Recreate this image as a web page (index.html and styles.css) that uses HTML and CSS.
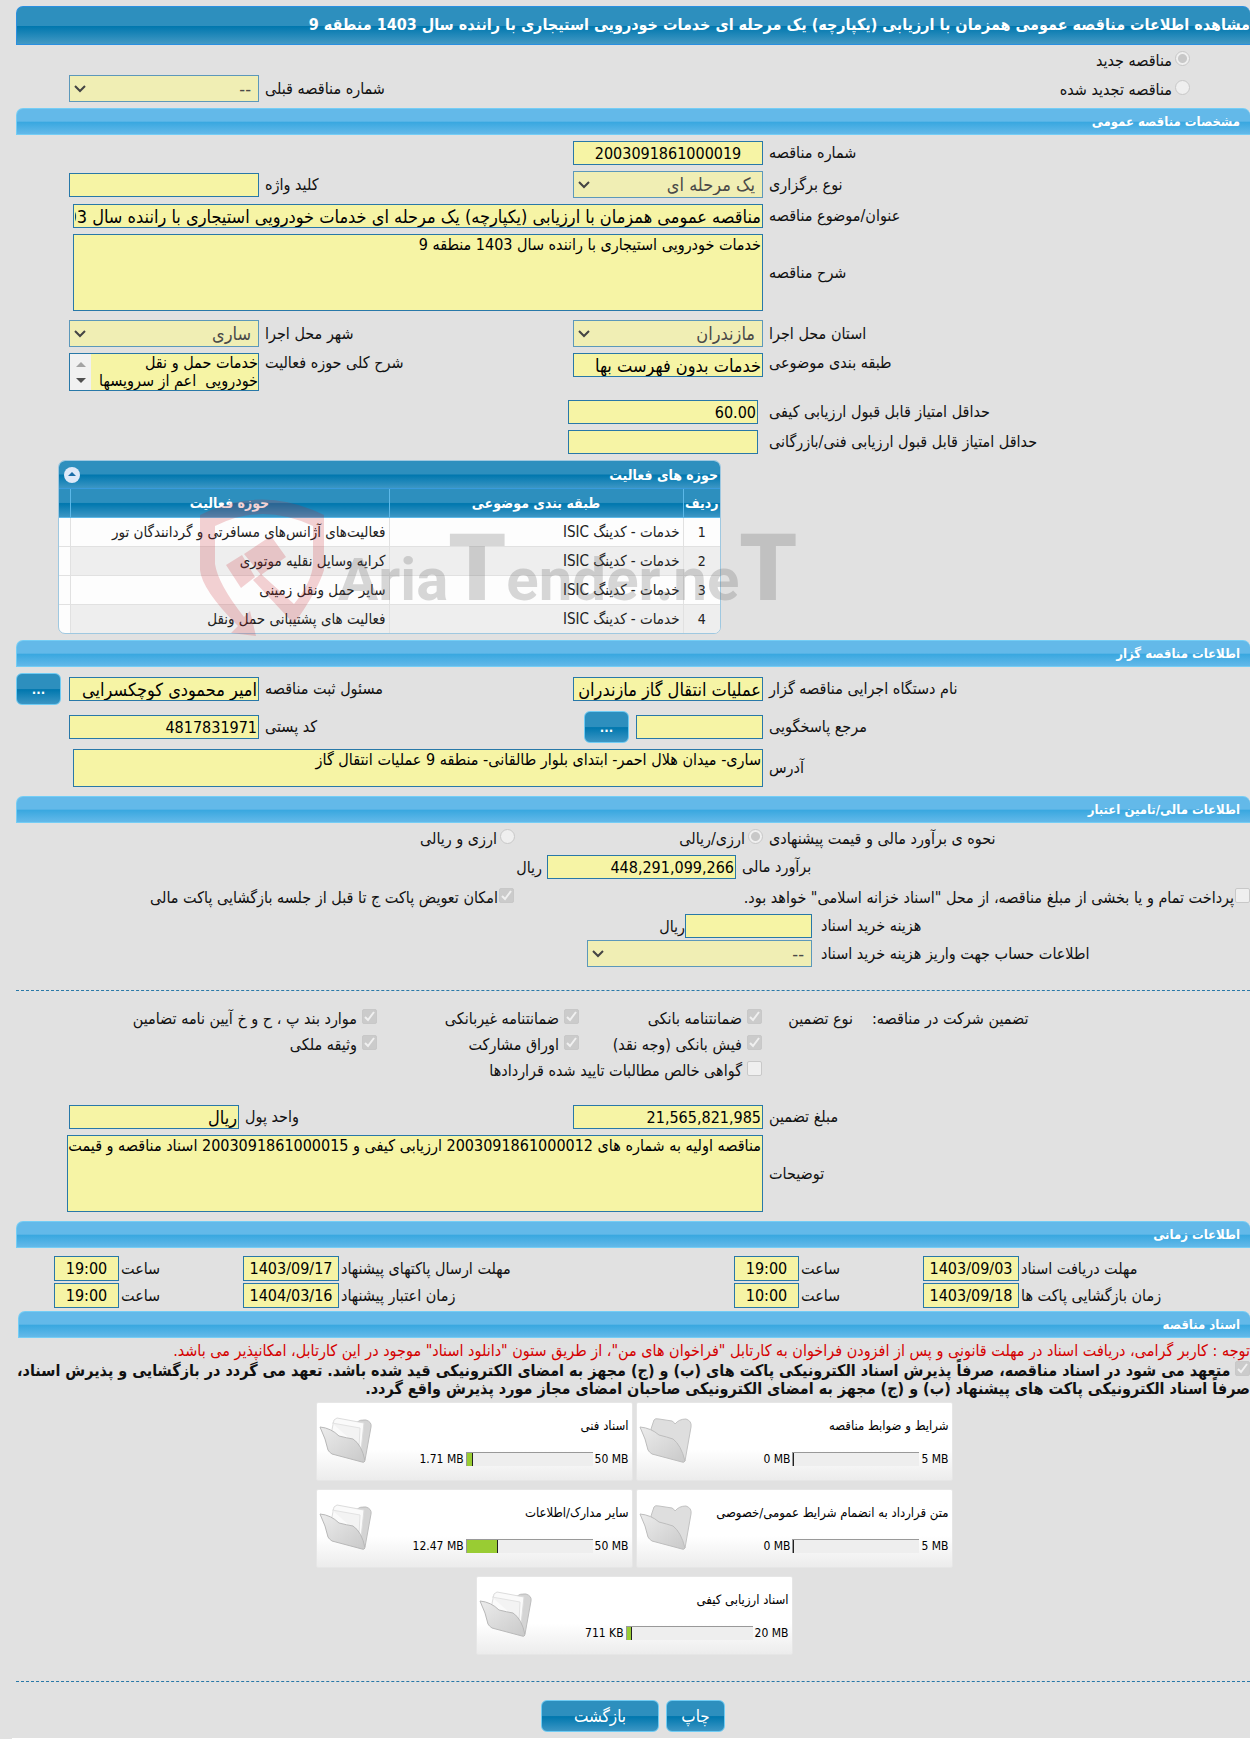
FILE: index.html
```html
<!DOCTYPE html>
<html lang="fa" dir="rtl">
<head>
  <meta charset="UTF-8">
  <meta name="viewport" content="width=device-width, initial-scale=1.0">
  <title>مشاهده اطلاعات مناقصه</title>
  <link rel="stylesheet" href="styles.css">
</head>
<body>
  <!-- folder shapes used by the document cards -->
  <svg class="defs" width="0" height="0" aria-hidden="true">
    <defs>
      <linearGradient id="folderFill" x1="0" y1="0" x2="1" y2="1">
        <stop offset="0" stop-color="#ececec"/>
        <stop offset="1" stop-color="#c9c9c9"/>
      </linearGradient>
      <symbol id="folderEmpty" viewBox="0 0 54 46">
        <path d="M12 12 L15 3 Q16 1 20 2 L33 4 Q35 5 36 7 Q40 2 47 2 Q53 4 52 10 L46 44 L24 36Z" fill="#dedede" stroke="#c2c2c2"/>
        <path d="M1 10 Q12 11 20 18 Q28 20 34 22 Q42 28 46 44 Q45 46 43 45 L13 37 Q10 35 9 33 L6 22Z" fill="url(#folderFill)" stroke="#bdbdbd"/>
      </symbol>
      <symbol id="folderFull" viewBox="0 0 54 46">
        <path d="M36 6 Q42 2 47 3 Q53 5 52 10 L46 43 L30 30Z" fill="#d4d4d4" stroke="#bdbdbd"/>
        <path d="M15 3 L18 1 L45 6 L42 34 L11 22Z" fill="#fafafa" stroke="#dcdcdc"/>
        <path d="M13 6 L41 11 L40 30" fill="#f3f3f3" stroke="#e2e2e2"/>
        <path d="M1 10 Q12 11 20 19 Q28 21 34 22 Q43 28 46 44 Q45 46 43 45 L13 37 Q10 35 9 33 L6 22Z" fill="url(#folderFill)" stroke="#b8b8b8"/>
      </symbol>
    </defs>
  </svg>

  <main class="page">
    <h1 class="page-title">مشاهده اطلاعات مناقصه عمومی همزمان با ارزیابی (یکپارچه) یک مرحله ای خدمات خودرویی استیجاری با راننده سال 1403 منطقه 9</h1>

    <div class="choice-row first">
      <input type="radio" id="newTender" name="tenderKind" checked disabled>
      <label for="newTender">مناقصه جدید</label>
    </div>
    <div class="row flush">
      <div class="choice-row renewed">
        <input type="radio" id="renewedTender" name="tenderKind" disabled>
        <label for="renewedTender">مناقصه تجدید شده</label>
      </div>
      <label class="col-b" for="prevNumber">شماره مناقصه قبلی</label>
      <select id="prevNumber" class="field-b" disabled><option>--</option></select>
    </div>

    <h2 class="section">مشخصات مناقصه عمومی</h2>

    <div class="row">
      <label for="number">شماره مناقصه</label>
      <input type="text" id="number" class="center" value="2003091861000019" readonly>
    </div>
    <div class="row">
      <label for="holding">نوع برگزاری</label>
      <select id="holding" disabled><option>یک مرحله ای</option></select>
      <label for="keyword">کلید واژه</label>
      <input type="text" id="keyword" readonly>
    </div>
    <div class="row">
      <label for="subject">عنوان/موضوع مناقصه</label>
      <input type="text" id="subject" class="wide strong" value="مناقصه عمومی همزمان با ارزیابی (یکپارچه) یک مرحله ای خدمات خودرویی استیجاری با راننده سال 1403 منطقه 9" readonly>
    </div>
    <div class="row">
      <label for="description">شرح مناقصه</label>
      <textarea id="description" class="wide tall" readonly>خدمات خودرویی استیجاری با راننده سال 1403 منطقه 9</textarea>
    </div>
    <div class="row spaced">
      <label for="province">استان محل اجرا</label>
      <select id="province" disabled><option>مازندران</option></select>
      <label for="city">شهر محل اجرا</label>
      <select id="city" disabled><option>ساری</option></select>
    </div>
    <div class="row top">
      <label for="category">طبقه بندی موضوعی</label>
      <input type="text" id="category" class="strong" value="خدمات بدون فهرست بها" readonly>
      <label for="activity">شرح کلی حوزه فعالیت</label>
      <textarea id="activity" class="scrolling" readonly>خدمات حمل و نقل
خودرویی  اعم از سرویسها</textarea>
    </div>
    <div class="row spaced">
      <label for="qualityScore">حداقل امتیاز قابل قبول ارزیابی کیفی</label>
      <input type="text" id="qualityScore" class="shifted" value="60.00" readonly>
    </div>
    <div class="row">
      <label for="techScore">حداقل امتیاز قابل قبول ارزیابی فنی/بازرگانی</label>
      <input type="text" id="techScore" class="shifted" readonly>
    </div>

    <div class="grid-row">
      <div class="grid-box">
        <div class="grid-title">
          <span>حوزه های فعالیت</span>
          <button type="button" class="collapse" aria-label="بستن">
            <svg width="16" height="16" viewBox="0 0 16 16"><circle cx="8" cy="8" r="8" fill="#dfe9f8"/><path d="M4 9 L8 5 L12 9Z" fill="#1a6da8"/></svg>
          </button>
        </div>
        <table class="grid">
          <thead>
            <tr><th class="num">ردیف</th><th class="topic">طبقه بندی موضوعی</th><th class="area">حوزه فعالیت</th><th></th></tr>
          </thead>
          <tbody>
            <tr><td>1</td><td>خدمات - کدینگ ISIC</td><td>فعالیت‌های آژانس‌های مسافرتی و گردانندگان تور</td><td></td></tr>
            <tr><td>2</td><td>خدمات - کدینگ ISIC</td><td>کرایه وسایل نقلیه موتوری</td><td></td></tr>
            <tr><td>3</td><td>خدمات - کدینگ ISIC</td><td>سایر حمل ونقل زمینی</td><td></td></tr>
            <tr><td>4</td><td>خدمات - کدینگ ISIC</td><td>فعالیت های پشتیبانی حمل ونقل</td><td></td></tr>
          </tbody>
        </table>
      </div>
      <!-- watermark over the grid -->
      <div class="watermark" dir="ltr">
        <svg width="124" height="138" viewBox="0 0 124 138">
          <path d="M0 17 Q62 -14 124 17 V72 Q118 92 94 126 L53 82 L61 76 L94 106 Q112 84 113 66 V28 Q62 4 15 28 V66 Q18 86 44 119 L50 113 L56 138 L31 135 L38 128 Q2 92 0 72Z"/>
          <path d="M26 67 L42 57 L55 79 L41 90Z M44 56 L71 38 L86 59 L61 77Z"/>
        </svg>
        <span class="brand">Aria<b>T</b>ender.ne<b>T</b></span>
      </div>
    </div>

    <h2 class="section">اطلاعات مناقصه گزار</h2>

    <div class="row">
      <label for="agency">نام دستگاه اجرایی مناقصه گزار</label>
      <input type="text" id="agency" class="strong" value="عملیات انتقال گاز مازندران منطقه 9" readonly>
      <label for="registrar">مسئول ثبت مناقصه</label>
      <input type="text" id="registrar" class="strong" value="امیر محمودی کوچکسرایی" readonly>
      <button type="button" class="btn more">...</button>
    </div>
    <div class="row">
      <label for="contact">مرجع پاسخگویی</label>
      <div class="field-with-button">
        <input type="text" id="contact" readonly>
        <button type="button" class="btn more">...</button>
      </div>
      <label for="postal">کد پستی</label>
      <input type="text" id="postal" value="4817831971" readonly>
    </div>
    <div class="row">
      <label for="address">آدرس</label>
      <textarea id="address" class="wide short" readonly>ساری- میدان هلال احمر- ابتدای بلوار طالقانی- منطقه 9 عملیات انتقال گاز</textarea>
    </div>

    <h2 class="section spaced">اطلاعات مالی/تامین اعتبار</h2>

    <div class="row line">
      <span class="label">نحوه ی برآورد مالی و قیمت پیشنهادی</span>
      <div class="choice-row">
        <input type="radio" id="singleCurrency" name="currency" checked disabled>
        <label for="singleCurrency">ارزی/ریالی</label>
      </div>
      <div class="choice-row second-half">
        <input type="radio" id="mixedCurrency" name="currency" disabled>
        <label for="mixedCurrency">ارزی و ریالی</label>
      </div>
    </div>
    <div class="row estimate">
      <label for="estimate">برآورد مالی</label>
      <input type="text" id="estimate" value="448,291,099,266" readonly>
      <span>ریال</span>
    </div>
    <div class="row treasury">
      <div class="choice-row">
        <input type="checkbox" id="treasury" disabled>
        <label for="treasury">پرداخت تمام و یا بخشی از مبلغ مناقصه، از محل "اسناد خزانه اسلامی" خواهد بود.</label>
      </div>
      <div class="choice-row">
        <input type="checkbox" id="replace" checked disabled>
        <label for="replace">امکان تعویض پاکت ج تا قبل از جلسه بازگشایی پاکت مالی</label>
      </div>
    </div>
    <div class="row cost">
      <label for="docCost">هزینه خرید اسناد</label>
      <div class="cost-field">
        <input type="text" id="docCost" readonly>
        <span>ریال</span>
      </div>
    </div>
    <div class="row cost tight">
      <label for="account">اطلاعات حساب جهت واریز هزینه خرید اسناد</label>
      <select id="account" disabled><option>--</option></select>
    </div>

    <hr class="divider">

    <div class="guarantee">
      <span class="guarantee-for">تضمین شرکت در مناقصه:</span>
      <span class="guarantee-kind">نوع تضمین</span>
      <div class="guarantee-list">
        <div class="choice-row gap"><input type="checkbox" id="g1" checked disabled><label for="g1">ضمانتنامه بانکی</label></div>
        <div class="choice-row gap"><input type="checkbox" id="g2" checked disabled><label for="g2">ضمانتنامه غیربانکی</label></div>
        <div class="choice-row gap"><input type="checkbox" id="g3" checked disabled><label for="g3">موارد بند پ ، ح و خ آیین نامه تضامین</label></div>
        <div class="choice-row gap"><input type="checkbox" id="g4" checked disabled><label for="g4">فیش بانکی (وجه نقد)</label></div>
        <div class="choice-row gap"><input type="checkbox" id="g5" checked disabled><label for="g5">اوراق مشارکت</label></div>
        <div class="choice-row gap"><input type="checkbox" id="g6" checked disabled><label for="g6">وثیقه ملکی</label></div>
        <div class="choice-row gap full"><input type="checkbox" id="g7" disabled><label for="g7">گواهی خالص مطالبات تایید شده قراردادها</label></div>
      </div>
    </div>

    <div class="row">
      <label for="amount">مبلغ تضمین</label>
      <input type="text" id="amount" value="21,565,821,985" readonly>
      <label for="unit" class="unit-label">واحد پول</label>
      <input type="text" id="unit" class="unit strong" value="ریال" readonly>
    </div>
    <div class="row">
      <label for="notes">توضیحات</label>
      <textarea id="notes" class="wide wider tall" readonly>مناقصه اولیه به شماره های 2003091861000012 ارزیابی کیفی و 2003091861000015 اسناد مناقصه و قیمت</textarea>
    </div>

    <h2 class="section spaced">اطلاعات زمانی</h2>

    <div class="dates">
      <label for="d1">مهلت دریافت اسناد</label>
      <input type="text" id="d1" value="1403/09/03" readonly>
      <label for="t1">ساعت</label>
      <input type="text" id="t1" value="19:00" readonly>
      <label for="d2">مهلت ارسال پاکتهای پیشنهاد</label>
      <input type="text" id="d2" value="1403/09/17" readonly>
      <label for="t2">ساعت</label>
      <input type="text" id="t2" value="19:00" readonly>
      <label for="d3" class="new-line">زمان بازگشایی پاکت ها</label>
      <input type="text" id="d3" value="1403/09/18" readonly>
      <label for="t3">ساعت</label>
      <input type="text" id="t3" value="10:00" readonly>
      <label for="d4">زمان اعتبار پیشنهاد</label>
      <input type="text" id="d4" value="1404/03/16" readonly>
      <label for="t4">ساعت</label>
      <input type="text" id="t4" value="19:00" readonly>
    </div>

    <section class="documents">
      <h2 class="section">اسناد مناقصه</h2>
      <p class="notice">توجه : کاربر گرامی، دریافت اسناد در مهلت قانونی و پس از افزودن فراخوان به کارتابل "فراخوان های من"، از طریق ستون "دانلود اسناد" موجود در این کارتابل، امکانپذیر می باشد.</p>
      <p class="commit">
        <input type="checkbox" id="commit" checked disabled>
        <label for="commit">متعهد می شود در اسناد مناقصه، صرفاً پذیرش اسناد الکترونیکی پاکت های (ب) و (ج) مجهز به امضای الکترونیکی قید شده باشد. تعهد می گردد در بازگشایی و پذیرش اسناد،<br>صرفاً اسناد الکترونیکی پاکت های پیشنهاد (ب) و (ج) مجهز به امضای الکترونیکی صاحبان امضای مجاز مورد پذیرش واقع گردد.</label>
      </p>

      <div class="cards">
        <div class="card">
          <div class="card-title">شرایط و ضوابط مناقصه</div>
          <svg class="folder"><use href="#folderEmpty"/></svg>
          <div class="usage"><span dir="ltr">5 MB</span><div class="bar" dir="ltr"><div class="used" style="width: 0%"></div></div><span dir="ltr">0 MB</span></div>
        </div>
        <div class="card">
          <div class="card-title">اسناد فنی</div>
          <svg class="folder"><use href="#folderFull"/></svg>
          <div class="usage"><span dir="ltr">50 MB</span><div class="bar" dir="ltr"><div class="used" style="width: 5%"></div></div><span dir="ltr">1.71 MB</span></div>
        </div>
        <div class="card">
          <div class="card-title">متن قرارداد به انضمام شرایط عمومی/خصوصی</div>
          <svg class="folder"><use href="#folderEmpty"/></svg>
          <div class="usage"><span dir="ltr">5 MB</span><div class="bar" dir="ltr"><div class="used" style="width: 0%"></div></div><span dir="ltr">0 MB</span></div>
        </div>
        <div class="card">
          <div class="card-title">سایر مدارک/اطلاعات</div>
          <svg class="folder"><use href="#folderFull"/></svg>
          <div class="usage"><span dir="ltr">50 MB</span><div class="bar" dir="ltr"><div class="used" style="width: 25%"></div></div><span dir="ltr">12.47 MB</span></div>
        </div>
        <div class="card">
          <div class="card-title">اسناد ارزیابی کیفی</div>
          <svg class="folder"><use href="#folderFull"/></svg>
          <div class="usage"><span dir="ltr">20 MB</span><div class="bar" dir="ltr"><div class="used" style="width: 4%"></div></div><span dir="ltr">711 KB</span></div>
        </div>
      </div>
    </section>

    <hr class="divider last">

    <div class="actions">
      <button type="button" class="btn print">چاپ</button>
      <button type="button" class="btn back">بازگشت</button>
    </div>
  </main>
</body>
</html>
```

FILE: styles.css
```css
* {
  box-sizing: border-box;
  font-family: "DejaVu Sans Condensed", "DejaVu Sans", sans-serif;
}

body {
  margin: 0;
  background-color: #e1e1e1;
  color: #111;
  font-size: 16px;
}

.defs {
  position: absolute;
}

.page {
  margin-left: 12px;
  padding: 6px 0 6px 4px;
  border-bottom: 1px solid #fff;
}

h1, h2, p {
  margin: 0;
}

label, .label {
  line-height: 20px;
  white-space: nowrap;
}

/* header bars */
.page-title {
  height: 39px;
  line-height: 36px;
  border: 1px solid #2a8fe0;
  border-radius: 7px 7px 0 0;
  border-right: 0;
  background: linear-gradient(#2d8fbe 0, #2d8fbe 50%, #0077ae 52%, #4399c4 100%);
  color: #fff;
  font-size: 16px;
  white-space: nowrap;
  overflow: hidden;
}

.section {
  height: 27px;
  margin-top: 6px;
  padding-right: 10px;
  line-height: 25px;
  border: 1px solid #74cdf5;
  border-right: 0;
  border-radius: 7px 7px 0 0;
  background: linear-gradient(#63b9e9 0, #63b9e9 48%, #3aa8e0 54%, #63b9e9 100%);
  color: #fff;
  font-size: 13px;
}

.section.spaced {
  margin-top: 9px;
}

/* form rows: label, field, label, field, spare column */
.row {
  display: grid;
  grid-template-columns: 487fr 190fr 314fr 190fr 53fr;
  align-items: center;
  margin-top: 6px;
}

.row.flush {
  margin-top: 0;
}

.row.spaced {
  margin-top: 9px;
}

.row.top {
  align-items: start;
}

.row > label, .row > .label {
  padding-left: 6px;
  text-align: left;
}

.col-b {
  grid-column: 3;
}

.field-b {
  grid-column: 4;
}

input[type="text"], textarea, select {
  width: 100%;
  min-width: 0;
  margin: 0;
  border: 1px solid #2878a8;
  border-radius: 0;
  background-color: #f6f4a5;
  color: #000;
  outline: none;
}

input[type="text"] {
  height: 24px;
  padding: 0 1px;
  font-size: 16px;
}

input[type="text"].strong {
  font-size: 18px;
}

input.center {
  text-align: center;
}

input.shifted {
  margin-right: 5px;
}

textarea {
  display: block;
  padding: 1px;
  resize: none;
  overflow: hidden;
  font-size: 16px;
  line-height: 18px;
  white-space: pre;
}

.wide {
  grid-column: 2 / 5;
}

.row input.wide, .row textarea.wide {
  justify-self: start;
  width: calc(100% - 4px);
}

.row textarea.wider {
  width: calc(100% + 2px);
}

.tall {
  height: 77px;
}

.short {
  height: 38px;
}

/* list box with its scroll arrows on the left */
.scrolling {
  height: 38px;
  padding: 0 0 0 22px;
  background-image:
    url("data:image/svg+xml,%3Csvg xmlns='http://www.w3.org/2000/svg' width='21' height='36'%3E%3Cpath d='M0 0H21V36H0Z' fill='%23f1f1f1'/%3E%3Cpath d='M6 13L11 8L16 13Z' fill='%23a3a3a3'/%3E%3Cpath d='M6 24L11 29L16 24Z' fill='%23505050'/%3E%3C/svg%3E");
  background-position: left top;
  background-repeat: no-repeat;
}

select {
  height: 27px;
  padding: 0 7px 0 24px;
  appearance: none;
  border-color: #5c98ba;
  background: #f0eeb4 url("data:image/svg+xml,%3Csvg xmlns='http://www.w3.org/2000/svg' width='12' height='8'%3E%3Cpath d='M1 1L6 6L11 1' fill='none' stroke='%23444' stroke-width='2'/%3E%3C/svg%3E") 4px center no-repeat;
  color: #4a4a48;
  font-size: 18px;
  opacity: 1;
}

/* radios and tick boxes */
input[type="radio"], input[type="checkbox"] {
  flex: none;
  appearance: none;
  width: 15px;
  height: 15px;
  margin: 0;
  border: 1px solid #c8c8c8;
  background-color: #efefef;
}

input[type="radio"] {
  border-radius: 50%;
}

input[type="radio"]:checked {
  background: radial-gradient(circle, #c8c8c8 4px, #efefef 5px);
}

input[type="checkbox"] {
  border-radius: 2px;
}

input[type="checkbox"]:checked {
  background: #cbcbcb url("data:image/svg+xml,%3Csvg xmlns='http://www.w3.org/2000/svg' width='13' height='13'%3E%3Cpath d='M2 7L5 10L11 2' fill='none' stroke='%23f0f0f0' stroke-width='2'/%3E%3C/svg%3E") center no-repeat;
}

.choice-row {
  display: flex;
  align-items: flex-start;
  gap: 3px;
}

.choice-row.gap {
  gap: 5px;
}

.choice-row.first {
  height: 30px;
  padding: 6px 60px 0 0;
}

.choice-row.renewed {
  padding: 2px 60px 0 0;
}

/* activity grid */
.grid-row {
  position: relative;
  margin-top: 6px;
  padding: 0 529px 0 42px;
}

.grid-box {
  border: 1px solid #9fc8e0;
  border-radius: 7px;
  overflow: hidden;
  background-color: #fdfdfd;
}

.grid-title {
  display: flex;
  justify-content: space-between;
  align-items: center;
  height: 28px;
  padding: 0 2px 0 5px;
  border-bottom: 1px solid #3a9bdc;
  background: linear-gradient(#2d8fbe 0, #2d8fbe 48%, #0077ae 52%, #3c96c4 100%);
  color: #fff;
  font-size: 14px;
  font-weight: bold;
}

.collapse {
  width: 16px;
  height: 16px;
  padding: 0;
  border: 0;
  background: none;
}

.collapse svg {
  display: block;
}

.grid {
  width: 100%;
  border-collapse: collapse;
  table-layout: fixed;
}

.grid th {
  height: 28px;
  padding: 0;
  border-left: 1px solid #5cb8e8;
  border-bottom: 1px solid #5cb8e8;
  background: linear-gradient(#2d8fbe 0, #2d8fbe 48%, #0077ae 52%, #3c96c4 100%);
  color: #fff;
  font-size: 14px;
}

.grid td {
  height: 29px;
  padding: 0 3px;
  border-left: 1px solid #e1e1e1;
  border-bottom: 1px solid #e1e1e1;
  color: #222;
  font-size: 15px;
  line-height: 20px;
  white-space: nowrap;
}

.grid th:last-child, .grid td:last-child {
  border-left: 0;
}

.grid tr:last-child td {
  border-bottom: 0;
}

.grid td:first-child {
  text-align: center;
  font-size: 14px;
}

.grid tbody tr:nth-child(even) td:not(:last-child) {
  background-color: #eee;
}

.grid .num {
  width: 37px;
}

.grid .topic {
  width: 294px;
}

.grid .area {
  width: 319px;
}

.watermark {
  position: absolute;
  top: 38px;
  left: 184px;
  display: flex;
  align-items: flex-end;
  gap: 14px;
  pointer-events: none;
}

.watermark svg {
  fill: rgba(200, 30, 40, 0.2);
}

.brand {
  padding-bottom: 16px;
  color: rgba(90, 90, 90, 0.24);
  font-family: Roboto, "Liberation Sans", sans-serif;
  font-size: 60px;
  font-weight: bold;
  line-height: 80px;
}

.brand b {
  font-family: inherit;
  font-size: 92px;
}

/* buttons */
.btn {
  height: 32px;
  padding: 0;
  border: 1px solid #6fcbf3;
  border-radius: 6px;
  background: linear-gradient(#2d8fbe 0, #2d8fbe 49%, #0077ae 52%, #3c96c4 100%);
  color: #fff;
  font-size: 17px;
}

.more {
  justify-self: end;
  width: 45px;
  font-size: 13px;
  font-weight: bold;
}

.field-with-button {
  display: flex;
  align-items: center;
  gap: 7px;
}

.field-with-button input[type="text"] {
  flex: none;
  width: 127px;
}

.field-with-button .btn {
  flex: none;
}

/* financial rows */
.second-half {
  margin-right: 58px;
}

.row.line {
  align-items: start;
}

.row.estimate {
  grid-template-columns: 514fr 189fr 531fr;
}

.row.estimate span {
  padding-right: 5px;
}

.row.treasury {
  grid-template-columns: 736fr 498fr;
  margin-top: 9px;
}

.treasury .choice-row {
  gap: 1px;
}

.row.cost {
  grid-template-columns: 438fr 225fr 571fr;
}

.row.cost > label {
  padding-left: 9px;
}

.row.tight {
  margin-top: 2px;
}

.cost-field {
  display: flex;
  align-items: center;
}

.cost-field input[type="text"] {
  width: 127px;
}

.divider {
  height: 0;
  margin: 23px 0 0;
  border: 0;
  border-top: 1px dashed #2878a8;
}

.guarantee {
  display: grid;
  grid-template-columns: 378fr 110fr 746fr;
  margin: 18px 0 24px;
}

.guarantee > span {
  line-height: 20px;
}

.guarantee-for {
  text-align: left;
}

.guarantee-kind {
  padding-right: 19px;
}

.guarantee-list {
  display: grid;
  grid-template-columns: 183fr 202fr 361fr;
  row-gap: 6px;
}

.guarantee-list .full {
  grid-column: 1 / 4;
}

.unit-label {
  margin-left: -20px;
}

.row .unit {
  justify-self: end;
  width: 170px;
}

/* deadlines */
.dates {
  display: grid;
  grid-template-columns: 231fr 96fr 124fr 65fr 395fr 96fr 124fr 65fr 38fr;
  row-gap: 2px;
  align-items: center;
  margin-top: 8px;
}

.dates label {
  padding-left: 2px;
  text-align: left;
}

.dates .new-line {
  grid-column: 1;
}

.dates input[type="text"] {
  height: 25px;
  text-align: center;
}

/* documents */
.documents {
  padding-left: 2px;
}

.documents .section {
  margin-top: 3px;
}

.notice {
  margin-top: 3px;
  color: #d40000;
  line-height: 20px;
  white-space: nowrap;
}

.commit {
  line-height: 18px;
  white-space: nowrap;
}

.commit label {
  line-height: 18px;
  font-weight: bold;
}

.cards {
  display: flex;
  flex-wrap: wrap;
  justify-content: center;
  gap: 8px 3px;
  max-width: 640px;
  margin: 4px auto 0;
}

.card {
  display: grid;
  grid-template-columns: 1fr 54px;
  grid-template-rows: 48px 16px;
  width: 317px;
  height: 79px;
  padding: 0 3px 0 2px;
  border: 1px solid #e6e6e6;
  border-radius: 2px;
  background: linear-gradient(#fff 0, #fff 60%, #ececec 100%);
  color: #000;
  font-size: 12px;
}

.card-title {
  padding-top: 14px;
  font-size: 13px;
  line-height: 18px;
}

.folder {
  grid-row: 1 / 3;
  grid-column: 2;
  align-self: end;
  width: 54px;
  height: 46px;
  margin-bottom: 4px;
}

.usage {
  display: flex;
  align-items: center;
  gap: 2px;
}

.bar {
  width: 127px;
  height: 14px;
  border-top: 1px solid #999;
  border-left: 1px solid #999;
  background-color: #eee;
}

.used {
  height: 100%;
  border-right: 1px solid #222;
  background-color: #9c3;
}

.divider.last {
  margin-top: 26px;
}

.actions {
  display: flex;
  justify-content: center;
  gap: 7px;
  margin-top: 18px;
}

.print {
  width: 59px;
}

.back {
  width: 118px;
}
```
